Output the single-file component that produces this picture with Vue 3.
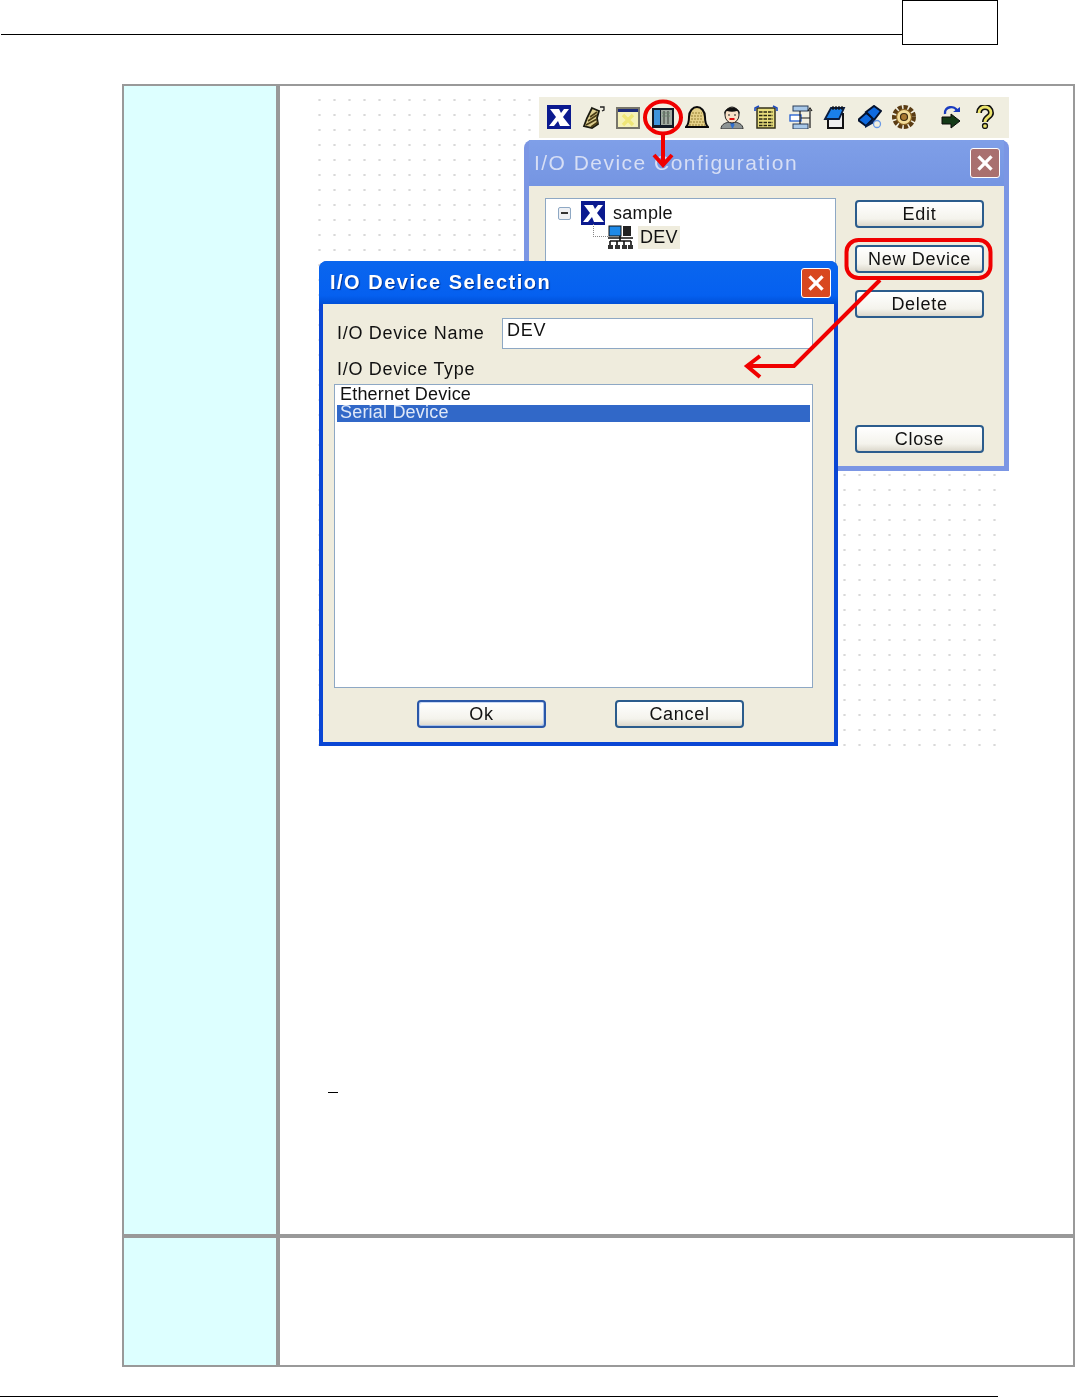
<script setup>
const configButtons = ['Edit', 'New Device', 'Delete']
</script>

<template>
  <div class="page">
    <header class="top">
      <div class="top-line"></div>
      <div class="page-box"></div>
    </header>

    <div class="table">
      <div class="label-cell"></div>
      <div class="body-cell">
        <div class="canvas">
          <!-- toolbar -->
          <div class="toolbar">
            <svg class="tool" viewBox="0 0 24 24">
              <rect width="24" height="24" fill="#0b1a8f" />
              <path d="M3 4h9l2 4 3-4h5l-6 8 7 9H13l-2-5-4 5H2l7-9z" fill="#fff" />
            </svg>
            <svg class="tool" viewBox="0 0 24 24">
              <path d="M10 3l7 3-2 7 1 6-6 4-8-2 3-8z" fill="#dccd8e" stroke="#1a1a10" stroke-width="1.800" />
              <path d="M4 20l11-6M6 16l9-6M8 12l7-5M9 22l7-5" stroke="#4a3c14" stroke-width="1.600" />
              <path d="M18 2h4v3l-2 1" stroke="#222" stroke-width="1.300" fill="none" />
            </svg>
            <svg class="tool" viewBox="0 0 24 24">
              <rect x="1" y="3" width="22" height="20" fill="#f5f1b8" stroke="#77756a" stroke-width="2" />
              <rect x="2" y="4" width="20" height="3" fill="#1c2a78" />
              <path d="M7 10l10 10M17 10L7 20" stroke="#efe678" stroke-width="3.500" />
            </svg>
            <svg class="tool" viewBox="0 0 24 24">
              <rect x="1" y="3" width="22" height="20" fill="#121a26" />
              <rect x="3" y="5" width="6" height="15" fill="#3f94dc" />
              <rect x="10" y="5" width="11" height="15" fill="#a0aaa0" />
              <path d="M13 6v13M17 6v13" stroke="#59625a" stroke-width="1.500" />
              <path d="M11 8h9M11 11h9" stroke="#6e8a70" stroke-width="1" stroke-dasharray="2 1" />
            </svg>
            <svg class="tool" viewBox="0 0 24 24">
              <path d="M1 22c2-2 3-4 3-10s4-10 8-10 8 4 8 10 1 8 3 10z" fill="#e4d088" stroke="#0a0a0a" stroke-width="2" />
              <path d="M7 8h10M6 11h12M6 14h12M5 17h14M4 20h16" stroke="#b09a50" stroke-width="1.300" stroke-dasharray="2 1" />
            </svg>
            <svg class="tool" viewBox="0 0 24 24">
              <path d="M1 24c0-5 5-7 11-7s11 2 11 7z" fill="#8d9494" stroke="#333" />
              <path d="M10.500 17h3l1 3-2 4-2-4z" fill="#2f6fd0" />
              <ellipse cx="12" cy="10" rx="7" ry="8" fill="#f9e2c8" stroke="#222" />
              <path d="M4 10C3 0 21 0 20 10c-1-3-2-4-3-4-3 1-7 1-10 0-1 0-2 1-3 4z" fill="#111" />
              <path d="M9.500 14h5" stroke="#e01010" stroke-width="2" />
              <path d="M8 10h2M14 10h2" stroke="#222" stroke-width="1.200" />
            </svg>
            <svg class="tool" viewBox="0 0 24 24">
              <rect x="3" y="3" width="18" height="20" fill="#e8de7c" stroke="#33311a" stroke-width="1.500" />
              <path d="M5 7h14M5 10.500h14M5 14h14M5 17.500h14M5 20.500h14" stroke="#2a2812" stroke-width="1.600" stroke-dasharray="3.500 1" />
              <path d="M5 1L1 3v3M19 1l4 2v3" stroke="#1f4cc0" stroke-width="1.600" fill="none" />
            </svg>
            <svg class="tool" viewBox="0 0 24 24">
              <rect x="4" y="1" width="15" height="5" fill="#a8c8e8" stroke="#2a3c58" />
              <rect x="1" y="10" width="11" height="6" fill="#fff" stroke="#1f5cd0" stroke-width="1.300" />
              <rect x="4" y="19" width="15" height="5" fill="#a8c8e8" stroke="#2a3c58" />
              <path d="M11 6v13M12 13h9M21 5v18M19 6l2-3 2 3" stroke="#1a1a1a" stroke-width="1.200" fill="none" />
            </svg>
            <svg class="tool" viewBox="0 0 24 24">
              <path d="M7 9h13v14H5V12z" fill="#eee" stroke="#111" stroke-width="2" />
              <path d="M2 14l6-11h13l-5 11z" fill="#1a80ea" stroke="#0c1e40" stroke-width="1.800" />
              <path d="M10 1v4M13 1v4M16 1v4M19 1v4" stroke="#111" stroke-width="1.200" />
            </svg>
            <svg class="tool" viewBox="0 0 24 24">
              <path d="M0 15l8-7 8 5-8 8z" fill="#0e6ae0" stroke="#04122e" stroke-width="2" />
              <path d="M8 7l8-6 7 5-7 9z" fill="#0e6ae0" stroke="#04122e" stroke-width="2" />
              <path d="M7 21l9-7v4l-9 5z" fill="#06204e" />
              <circle cx="19" cy="19" r="3.500" fill="none" stroke="#6a9ae6" stroke-width="1.300" />
            </svg>
            <svg class="tool" viewBox="0 0 24 24">
              <circle cx="12" cy="12" r="9.500" fill="none" stroke="#5a3c14" stroke-width="5" stroke-dasharray="4 1.500" />
              <circle cx="12" cy="12" r="7.500" fill="#f2dc98" stroke="#8a6424" stroke-width="1.200" />
              <circle cx="12" cy="12" r="3.500" fill="#a87830" stroke="#3a2a10" stroke-width="1.200" />
            </svg>
            <svg class="tool tool-far" viewBox="0 0 24 24">
              <path d="M6 9c-1-8 10-9 12-3" fill="none" stroke="#1a3cc0" stroke-width="2.400" />
              <path d="M14 7h7V2z" fill="#1a3cc0" />
              <path d="M3 12h9V9l9 7-9 7v-4H3z" fill="#143a18" stroke="#0a0a0a" />
            </svg>
            <svg class="tool" viewBox="0 0 24 24">
              <path d="M6 8c0-8 12-8 12 0 0 4-6 4-6 9" fill="none" stroke="#111" stroke-width="6" />
              <path d="M6 8c0-8 12-8 12 0 0 4-6 4-6 9" fill="none" stroke="#ece46c" stroke-width="2.800" />
              <circle cx="12" cy="21" r="2.500" fill="#ece46c" stroke="#111" stroke-width="1.300" />
            </svg>
          </div>

          <!-- config window, inactive -->
          <div class="win win-config">
            <div class="win-title">
              <span>I/O Device Configuration</span>
              <span class="win-close"><svg viewBox="0 0 30 30"><path d="M8 8l14 14M22 8L8 22" stroke="#fff" stroke-width="3.500" /></svg></span>
            </div>
            <div class="win-body config-body">
              <div class="tree">
                <div class="tree-row">
                  <span class="tree-toggle"></span>
                  <svg class="tree-logo" viewBox="0 0 24 24">
                    <rect width="24" height="24" fill="#0b1a8f" />
                    <path d="M3 4h9l2 4 3-4h5l-6 8 7 9H13l-2-5-4 5H2l7-9z" fill="#fff" />
                  </svg>
                  <span>sample</span>
                </div>
                <div class="tree-row tree-child">
                  <span class="tree-link"></span>
                  <svg class="tree-net" viewBox="0 0 25 25">
                    <rect x="1" y="1" width="12" height="10" fill="#1f8ae8" stroke="#111" />
                    <rect x="15" y="1" width="8" height="10" fill="#222" />
                    <path d="M0 13h25M12 11v5M2 16h21M2 16v4M9 16v4M16 16v4M23 16v4" stroke="#111" stroke-width="1.600" fill="none" />
                    <path d="M0 20h5v4H0zM7 20h5v4H7zM14 20h5v4h-5zM20 20h5v4h-5z" fill="#333" />
                  </svg>
                  <span class="tree-sel">DEV</span>
                </div>
              </div>
              <div class="config-buttons">
                <button v-for="b in configButtons" :key="b" class="btn">{{ b }}</button>
                <button class="btn btn-close">Close</button>
              </div>
            </div>
          </div>

          <!-- selection window, active -->
          <div class="win win-select">
            <div class="win-title">
              <span>I/O Device Selection</span>
              <span class="win-close"><svg viewBox="0 0 30 30"><path d="M8 8l14 14M22 8L8 22" stroke="#fff" stroke-width="3.500" /></svg></span>
            </div>
            <div class="win-body select-body">
              <div class="name-row">
                <span>I/O Device Name</span>
                <div class="name-input">DEV</div>
              </div>
              <div class="type-label">I/O Device Type</div>
              <div class="listbox">
                <div class="list-item">Ethernet Device</div>
                <div class="list-item list-sel">Serial Device</div>
              </div>
              <div class="select-buttons">
                <button class="btn btn-default">Ok</button>
                <button class="btn">Cancel</button>
              </div>
            </div>
          </div>

          <!-- red marks drawn on the shot -->
          <svg class="marks" width="700" height="660" viewBox="0 0 700 660">
            <g transform="translate(-318 -97)" fill="none" stroke="#f00000" stroke-width="4">
              <ellipse cx="663" cy="117.500" rx="18" ry="16" />
              <path d="M663 135v29M654 155l9 10 9-10" />
              <rect x="846.500" y="240" width="144" height="38" rx="12" />
              <path d="M880 280l-86 86h-46M760 356l-13 10 13 11" />
            </g>
          </svg>
        </div>

        <div class="dash"></div>
      </div>
      <div class="label-cell"></div>
      <div class="body-cell"></div>
    </div>

    <div class="bottom-line"></div>
  </div>
</template>

<style scoped>
.page {
  width: 1075px;
  height: 1397px;
  overflow: hidden;
  background: #fff;
  font-family: "Liberation Sans", Arial, sans-serif;
  color: #111;
}
.top {
  display: flex;
  align-items: flex-start;
  width: 997px;
  height: 45px;
  margin-left: 1px;
}
.top-line {
  flex: 1;
  height: 34px;
  border-bottom: 1px solid #000;
}
.page-box {
  width: 94px;
  height: 43px;
  border: 1px solid #000;
}
.table {
  display: grid;
  grid-template-columns: 152px 793px;
  grid-template-rows: 1148px 127px;
  gap: 4px;
  width: 953px;
  box-sizing: border-box;
  margin: 39px 0 0 122px;
  padding: 2px;
  background: #999;
}
.label-cell {
  background: #ddffff;
}
.body-cell {
  background: #fff;
  position: relative;
  padding: 11px 0 0 38px;
  box-sizing: border-box;
}
.canvas {
  position: relative;
  width: 680px;
  height: 653px;
  background-image: radial-gradient(circle at 1.500px 3px, #d8d8d8 1px, transparent 1.300px);
  background-size: 15px 15px;
  filter: blur(0.35px);
}
.dash {
  width: 10px;
  height: 1px;
  margin: 342px 0 0 10px;
  background: #000;
}
.bottom-line {
  width: 998px;
  height: 1px;
  margin-top: 29px;
  background: #000;
}

.toolbar {
  position: absolute;
  left: 221px;
  top: 0;
  width: 470px;
  height: 41px;
  box-sizing: border-box;
  padding: 8px 0 0 8px;
  display: flex;
  gap: 10.500px;
  background: #f0eee0;
}
.tool {
  width: 24px;
  height: 24px;
  flex: none;
}
.tool-far {
  margin-left: 12px;
}

.win {
  position: absolute;
  box-sizing: border-box;
  display: flex;
  flex-direction: column;
  border-radius: 8px 8px 0 0;
}
.win-title {
  flex: none;
  display: flex;
  align-items: center;
  justify-content: space-between;
  font-weight: bold;
}
.win-close {
  width: 30px;
  height: 30px;
  border-radius: 3px;
  border: 1px solid #fff;
  box-sizing: border-box;
}
.win-close svg {
  display: block;
  width: 100%;
  height: 100%;
}
.win-body {
  flex: 1;
  min-height: 0;
  background: #efecdd;
  font-size: 18px;
}

.win-config {
  left: 206px;
  top: 43px;
  width: 485px;
  height: 331px;
  padding: 0 5px 5px 5px;
  background: #7b96e4;
}
.win-config .win-title {
  height: 46px;
  padding: 0 4px 0 5px;
  font-size: 21px;
  font-weight: normal;
  color: #d6def5;
  letter-spacing: 1.470px;
  background: linear-gradient(#7f9fe8, #7595e2);
}
.win-config .win-close {
  background: #a9706f;
}
.config-body {
  display: flex;
  padding: 12px 20px 18px 16px;
  justify-content: space-between;
  letter-spacing: 0.300px;
}
.tree {
  width: 291px;
  height: 120px;
  box-sizing: border-box;
  border: 1px solid #8ea8c4;
  background: #fff;
  padding: 2px 0 0 12px;
}
.tree-row {
  display: flex;
  align-items: center;
  gap: 8px;
  height: 24px;
}
.tree-toggle {
  width: 13px;
  height: 13px;
  margin-right: 2px;
  box-sizing: border-box;
  border: 1px solid #8ea8c4;
  border-radius: 2px;
  background: linear-gradient(#333 0 0) center / 7px 2px no-repeat, #eef0f4;
}
.tree-logo {
  width: 24px;
  height: 24px;
}
.tree-child {
  padding-left: 50px;
  gap: 5px;
}
.tree-link {
  width: 15px;
  height: 13px;
  margin: -14px -5px 0 -15px;
  border-left: 1px dotted #888;
  border-bottom: 1px dotted #888;
  box-sizing: border-box;
}
.tree-net {
  width: 25px;
  height: 25px;
}
.tree-sel {
  background: #efecdd;
  padding: 1px 2px;
}
.config-buttons {
  display: flex;
  flex-direction: column;
  gap: 17px;
  width: 129px;
  padding-top: 2px;
}
.btn {
  display: block;
  flex: none;
  width: 129px;
  height: 28px;
  padding: 0;
  border: 2px solid #2b5c8c;
  border-radius: 4px;
  background: linear-gradient(#ffffff, #f4f3ec 70%, #dcd8cc);
  font-family: inherit;
  font-size: 18px;
  letter-spacing: 0.700px;
  color: #111;
}
.btn-close {
  margin-top: 90px;
}

.win-select {
  left: 1px;
  top: 164px;
  width: 519px;
  height: 485px;
  padding: 0 4px 4px 4px;
  background: #0a46d4;
}
.win-select .win-title {
  height: 43px;
  margin: 0 -4px;
  padding: 0 7px 0 11px;
  font-size: 20px;
  color: #fff;
  letter-spacing: 1.500px;
  text-shadow: 1px 1px 1px #003090;
  background: linear-gradient(#0a66ee, #0560f0 80%, #0050d8);
  border-radius: 8px 8px 0 0;
}
.win-select .win-close {
  background: #d8481f;
}
.select-body {
  display: flex;
  flex-direction: column;
  padding: 14px 21px 0 11px;
  letter-spacing: 0.700px;
}
.name-row {
  display: flex;
  justify-content: space-between;
  align-items: center;
  padding-left: 3px;
}
.name-input {
  width: 311px;
  height: 31px;
  box-sizing: border-box;
  border: 1px solid #8ea8c4;
  background: #fff;
  padding-left: 4px;
  line-height: 22px;
}
.type-label {
  margin: 9px 0 4px 3px;
  line-height: 22px;
}
.listbox {
  height: 304px;
  box-sizing: border-box;
  border: 1px solid #8ea8c4;
  background: #fff;
  padding: 2px;
  letter-spacing: 0.200px;
}
.list-item {
  height: 18px;
  line-height: 14px;
  padding-left: 3px;
}
.list-sel {
  height: 17px;
  line-height: 15px;
  background: #3168c8;
  color: #dfe8f8;
}
.select-buttons {
  display: flex;
  justify-content: center;
  gap: 69px;
  margin-top: 12px;
  padding-left: 14px;
}
.btn-default {
  border-color: #2a57a8;
  box-shadow: inset -1px -1px 0 #a9c2ea, inset 1px 1px 0 #c8d8f4;
}
.marks {
  position: absolute;
  left: 0;
  top: 0;
  pointer-events: none;
}
</style>
